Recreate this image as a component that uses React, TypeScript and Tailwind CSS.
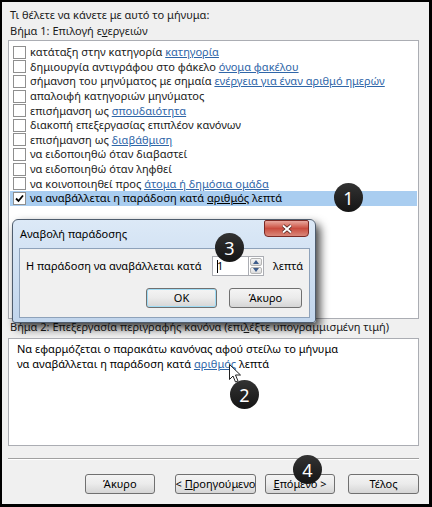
import React from "react";

const L = ({ children, dark }: { children: React.ReactNode; dark?: boolean }) => (
  <span className={dark ? "underline text-black" : "underline text-[#2f66a8]"}>{children}</span>
);

function Check({ checked }: { checked?: boolean }) {
  return (
    <span className="w-[13px] h-[13px] border border-[#8f8f8f] bg-white flex items-center justify-center shrink-0">
      {checked && (
        <svg width="9" height="9" viewBox="0 0 9 9">
          <path d="M1 4.5 L3.5 7 L8 1.5" stroke="#000" strokeWidth="1.8" fill="none" />
        </svg>
      )}
    </span>
  );
}

function Row({ children, checked, selected }: { children: React.ReactNode; checked?: boolean; selected?: boolean }) {
  return (
    <div className={selected ? "h-[14.6px] flex items-center gap-[4px] pl-[3px] mx-[1px] bg-[#a9cdf0] whitespace-nowrap" : "h-[14.6px] flex items-center gap-[4px] pl-[3px] mx-[1px] whitespace-nowrap"}>
      <Check checked={checked} />
      <span className="leading-[14px]">{children}</span>
    </div>
  );
}

function Btn({ children, className }: { children: React.ReactNode; className?: string }) {
  return (
    <div
      className={
        "h-[20px] flex items-center justify-center overflow-hidden whitespace-nowrap border border-[#707070] rounded-[3px] bg-gradient-to-b from-[#f4f4f4] via-[#ebebeb] to-[#d5d5d5] text-black " +
        (className ?? "")
      }
    >
      {children}
    </div>
  );
}

function Badge({ n, className }: { n: string; className: string }) {
  return (
    <div
      className={
        "absolute w-[29px] h-[29px] rounded-full bg-gradient-to-b from-[#333] to-[#151515] text-white flex items-center justify-center text-[18px] leading-none " +
        className
      }
    >
      {n}
    </div>
  );
}

export default function App() {
  return (
    <div className="relative w-[432px] h-[507px] bg-black pl-[2px] pt-[2px] pr-[3px] pb-[3px] font-['Noto_Sans',sans-serif] text-[11px] text-[#1a1a1a]">
      <div className="h-full bg-[#f0f0f0] pl-[6px] pr-[10px] flex flex-col">
        <div className="mt-[5px] h-[16px] leading-[16px] pl-[2px]">Τι θέλετε να κάνετε με αυτό το μήνυμα:</div>
        <div className="h-[16px] leading-[16px] pl-[2px]">
          Βήμα 1: Επιλογή ε<span className="underline">ν</span>εργειών
        </div>
        <div className="mt-[1px] h-[279px] border border-[#abadb3] bg-white pt-[4px] shrink-0">
          <Row>
            κατάταξη στην κατηγορία <L>κατηγορία</L>
          </Row>
          <Row>
            δημιουργία αντιγράφου στο φάκελο <L>όνομα φακέλου</L>
          </Row>
          <Row>
            σήμανση του μηνύματος με σημαία <L>ενέργεια για έναν αριθμό ημερών</L>
          </Row>
          <Row>απαλοιφή κατηγοριών μηνύματος</Row>
          <Row>
            επισήμανση ως <L>σπουδαιότητα</L>
          </Row>
          <Row>διακοπή επεξεργασίας επιπλέον κανόνων</Row>
          <Row>
            επισήμανση ως <L>διαβάθμιση</L>
          </Row>
          <Row>να ειδοποιηθώ όταν διαβαστεί</Row>
          <Row>να ειδοποιηθώ όταν ληφθεί</Row>
          <Row>
            να κοινοποιηθεί προς <L>άτομα ή δημόσια ομάδα</L>
          </Row>
          <Row checked selected>
            <span className="text-black">
              να αναβάλλεται η παράδοση κατά <L dark>αριθμός</L> λεπτά
            </span>
          </Row>
        </div>
        <div className="h-[16px] leading-[16px] pl-[2px] whitespace-nowrap">
          Βήμα 2: Επεξεργασία περιγραφής κανόνα (επι<span className="underline">λ</span>έξτε υπογραμμισμένη τιμή)
        </div>
        <div className="mt-[3px] h-[108px] border border-[#abadb3] bg-white pl-[8px] pt-[2px] shrink-0 text-black">
          <div className="h-[15px] leading-[15px]">Να εφαρμόζεται ο παρακάτω κανόνας αφού στείλω το μήνυμα</div>
          <div className="h-[15px] leading-[15px]">
            να αναβάλλεται η παράδοση κατά <L>αριθμός</L> λεπτά
          </div>
        </div>
        <div className="mt-[12px] h-[2px] border-t border-[#a0a0a0] border-b border-b-white shrink-0" />
        <div className="mt-[14px] flex shrink-0">
          <Btn className="ml-[77px] w-[71px]">Άκυρο</Btn>
          <Btn className="ml-[20px] w-[83px]">
            <span>
              &lt; <span className="underline">Π</span>ροηγούμενο
            </span>
          </Btn>
          <Btn className="ml-[9px] w-[71px]">
            <span>
              <span className="underline">Ε</span>πόμενο &gt;
            </span>
          </Btn>
          <Btn className="ml-[13px] w-[71px] shrink-0">Τέλος</Btn>
        </div>
      </div>

      {/* Dialog */}
      <div className="absolute left-[12px] top-[219px] w-[304px] h-[104px] rounded-t-[6px] rounded-b-[3px] border border-[#4f5d6e] bg-gradient-to-b from-[#dce9f7] to-[#c1d5ec] shadow-[4px_5px_10px_rgba(0,0,0,0.75)]">
        <div className="h-[28px] flex items-center pl-[7px] text-black">Αναβολή παράδοσης</div>
        <div className="absolute left-[251px] top-[0px] w-[45px] h-[17px] rounded-b-[4px] rounded-t-[2px] border border-[#7a2a25] bg-gradient-to-b from-[#e8a89f] via-[#c94c3f] to-[#d9877a] flex items-center justify-center">
          <svg width="12" height="10" viewBox="0 0 12 10">
            <path d="M2 1.5 L10 8.5 M10 1.5 L2 8.5" stroke="#3a1512" strokeWidth="3.2" />
            <path d="M2 1.5 L10 8.5 M10 1.5 L2 8.5" stroke="#fff" strokeWidth="2" />
          </svg>
        </div>
        <div className="ml-[6px] mr-[5px] h-[70px] bg-[#f0f0f0] border border-[#8ea2ba] pl-[6px] pt-[7px] text-black">
          <div className="h-[20px] flex items-center">
            <div className="w-[186px] whitespace-nowrap">Η παράδοση να αναβάλλεται κατά</div>
            <div className="w-[36px] h-[20px] border border-[#abadb3] border-r-0 bg-white flex items-center pl-[4px]">
              <span className="w-[1px] h-[13px] bg-black mr-[-1px]" />
              <span>1</span>
            </div>
            <div className="w-[16px] h-[20px] border border-[#abadb3] bg-white flex flex-col p-[1px] gap-[1px]">
              <div className="flex-1 border border-[#b5b5b5] rounded-[2px] bg-gradient-to-b from-[#f5f5f5] to-[#dcdcdc] flex items-center justify-center">
                <svg width="6" height="4" viewBox="0 0 6 4">
                  <path d="M0 4 L3 0 L6 4 Z" fill="#3c5b8a" />
                </svg>
              </div>
              <div className="flex-1 border border-[#b5b5b5] rounded-[2px] bg-gradient-to-b from-[#f5f5f5] to-[#dcdcdc] flex items-center justify-center">
                <svg width="6" height="4" viewBox="0 0 6 4">
                  <path d="M0 0 L3 4 L6 0 Z" fill="#3c5b8a" />
                </svg>
              </div>
            </div>
            <div className="ml-[9px]">λεπτά</div>
          </div>
          <div className="mt-[12px] flex">
            <Btn className="ml-[120px] w-[71px] border-[#3c7fb1] shadow-[inset_0_0_0_1px_#9fdcf5]">OK</Btn>
            <Btn className="ml-[12px] w-[73px]">Άκυρο</Btn>
          </div>
        </div>
      </div>

      {/* cursor */}
      <svg className="absolute left-[229px] top-[364px]" width="13" height="20" viewBox="0 0 13 20">
        <path d="M0.5 0.5 L0.5 15.5 L4 12 L6.5 18 L9 17 L6.5 11 L11.5 11 Z" fill="#fff" stroke="#222" strokeWidth="1" />
      </svg>

      <Badge n="1" className="left-[334px] top-[183px]" />
      <Badge n="2" className="left-[230px] top-[380px]" />
      <Badge n="3" className="left-[215px] top-[233px]" />
      <Badge n="4" className="left-[293px] top-[455px]" />
    </div>
  );
}
